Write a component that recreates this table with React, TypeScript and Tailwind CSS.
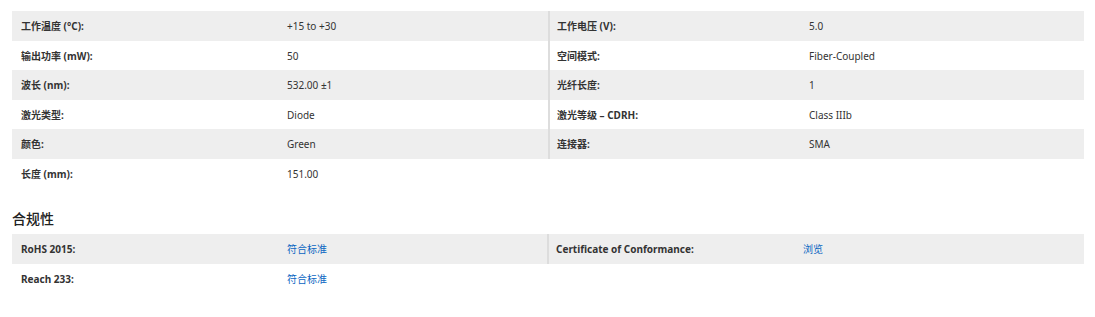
import React from "react";

type Cell = { label: string; value: string; link?: boolean } | null;

const specs: [Cell, Cell][] = [
  [
    { label: "工作温度 (°C):", value: "+15 to +30" },
    { label: "工作电压 (V):", value: "5.0" },
  ],
  [
    { label: "输出功率 (mW):", value: "50" },
    { label: "空间模式:", value: "Fiber-Coupled" },
  ],
  [
    { label: "波长 (nm):", value: "532.00 ±1" },
    { label: "光纤长度:", value: "1" },
  ],
  [
    { label: "激光类型:", value: "Diode" },
    { label: "激光等级 – CDRH:", value: "Class IIIb" },
  ],
  [
    { label: "颜色:", value: "Green" },
    { label: "连接器:", value: "SMA" },
  ],
  [{ label: "长度 (mm):", value: "151.00" }, null],
];

const compliance: [Cell, Cell][] = [
  [
    { label: "RoHS 2015:", value: "符合标准", link: true },
    { label: "Certificate of Conformance:", value: "浏览", link: true },
  ],
  [{ label: "Reach 233:", value: "符合标准", link: true }, null],
];

function Rows({
  rows,
  leftW,
  rightLabelW,
  rowH,
}: {
  rows: [Cell, Cell][];
  leftW: string;
  rightLabelW: string;
  rowH: string;
}) {
  return (
    <div className="flex flex-col">
      {rows.map((r, i) => (
        <div
          key={i}
          className={`flex ${rowH} items-center ${i % 2 === 0 ? "bg-[#eeeeee]" : "bg-white"}`}
        >
          <div className={`flex h-full ${leftW} items-center pt-[2px]`}>
            <div className="w-[266px] pl-[9px] font-bold text-[#333333]">{r[0]?.label}</div>
            <div className={`pl-[9px] ${r[0]?.link ? "text-[#0a66c2]" : "text-[#333333]"}`}>{r[0]?.value}</div>
          </div>
          {r[1] && (
            <div className="flex h-full flex-1 items-center border-l-2 border-[#dddddd] pt-[2px]">
              <div className={`${rightLabelW} pl-[7px] font-bold text-[#333333]`}>{r[1].label}</div>
              <div className={`pl-[7px] ${r[1].link ? "text-[#0a66c2]" : "text-[#333333]"}`}>{r[1].value}</div>
            </div>
          )}
        </div>
      ))}
    </div>
  );
}

export default function App() {
  return (
    <div
      className="w-[1095px] h-[317px] bg-white px-[12px] pt-[11px] text-[10px]"
      style={{ fontFamily: '"Noto Sans", "Noto Sans CJK SC", sans-serif' }}
    >
      <div className="w-[1072px]">
        <Rows rows={specs} leftW="w-[536px]" rightLabelW="w-[252px]" rowH="h-[29.5px]" />
        <div
          className="pt-[22px] pb-[7px] text-[14px] leading-[17px] font-medium text-[#222222]"
          style={{ fontFamily: '"Noto Sans CJK SC", sans-serif' }}
        >
          合规性
        </div>
        <Rows rows={compliance} leftW="w-[535px]" rightLabelW="w-[247px]" rowH="h-[29.5px]" />
      </div>
    </div>
  );
}
